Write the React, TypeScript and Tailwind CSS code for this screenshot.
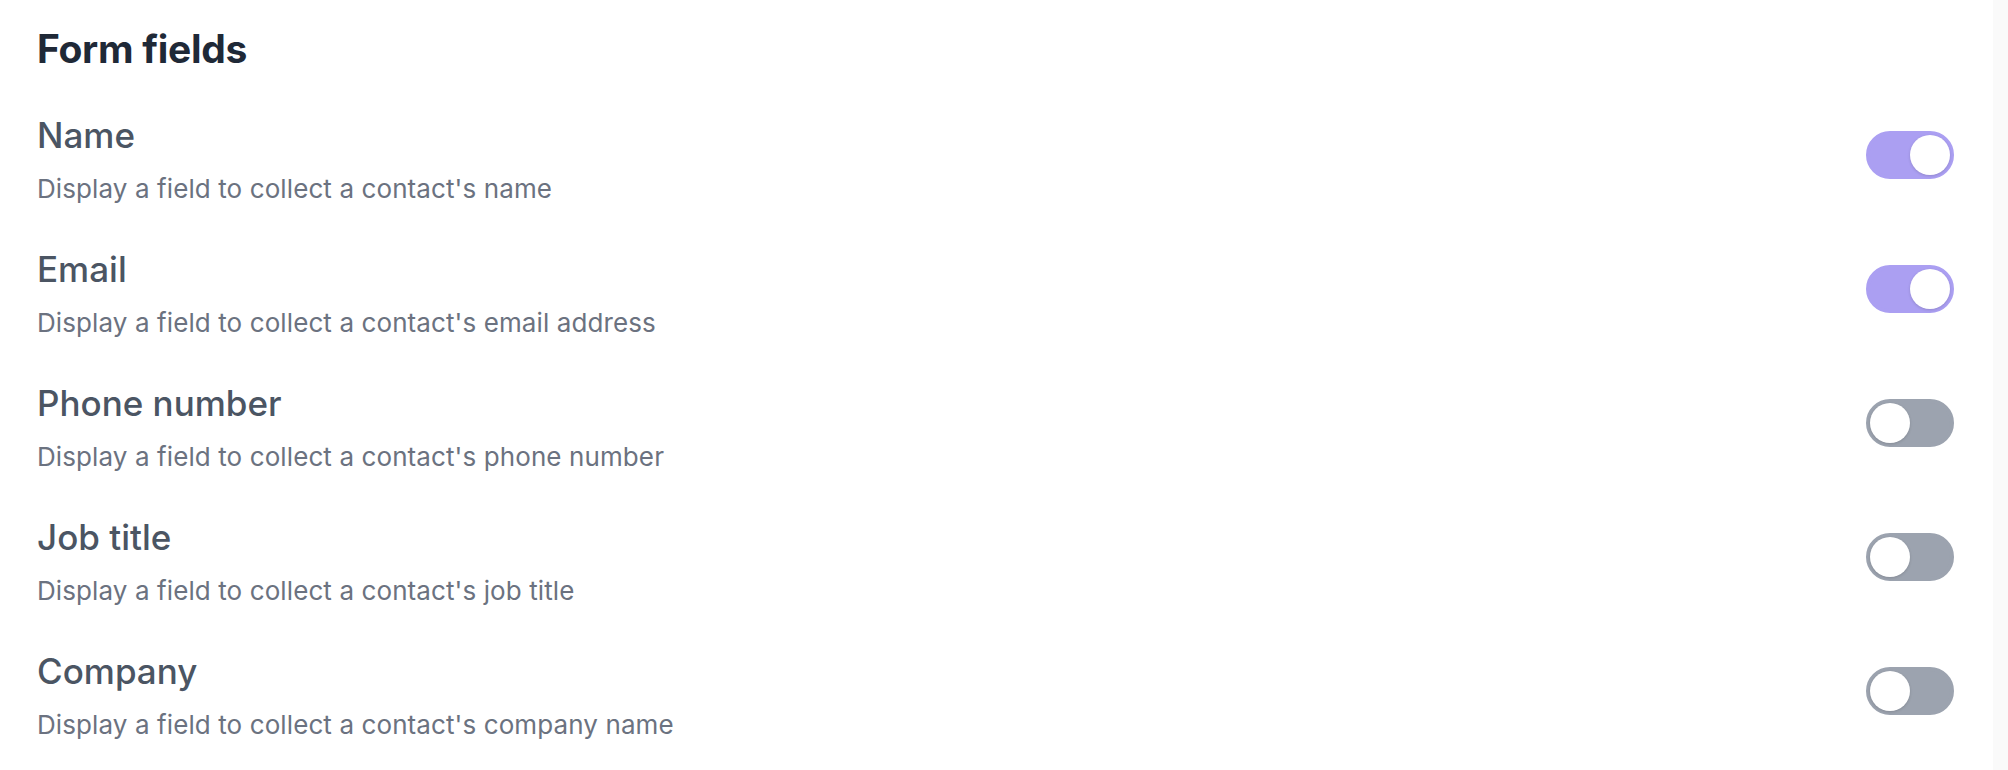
import React, { useState } from "react";

const fields = [
  { label: "Name", desc: "Display a field to collect a contact's name", on: true },
  { label: "Email", desc: "Display a field to collect a contact's email address", on: true },
  { label: "Phone number", desc: "Display a field to collect a contact's phone number", on: false },
  { label: "Job title", desc: "Display a field to collect a contact's job title", on: false },
  { label: "Company", desc: "Display a field to collect a contact's company name", on: false },
];

function Toggle({ on, onClick }: { on: boolean; onClick: () => void }) {
  return (
    <button
      onClick={onClick}
      className={
        "mt-[18px] flex h-[48px] w-[88px] shrink-0 items-center rounded-full border-[4px] " +
        (on ? "justify-end border-[#ab9ff2] bg-[#ab9ff2]" : "justify-start border-[#9ca3af] bg-[#9ca3af]")
      }
    >
      <span className="h-[40px] w-[40px] rounded-full bg-white shadow-[0_1px_3px_rgba(0,0,0,0.15)]" />
    </button>
  );
}

export default function App() {
  const [state, setState] = useState(fields.map((f) => f.on));
  return (
    <div className="flex h-[770px] w-full bg-white" style={{ fontFamily: "Inter, 'Noto Sans', sans-serif" }}>
      <div className="flex-1 pl-[37px] pr-[39px] pt-[25px]">
        <h2 className="text-[39px] font-bold leading-[48px] tracking-[-0.3px] text-[#1f2937]">Form fields</h2>
        <div className="mt-[40px] flex flex-col gap-[41px]">
          {fields.map((f, i) => (
            <div key={f.label} className="flex items-start justify-between">
              <div className="flex flex-col gap-[15px]">
                <div className="text-[35px] font-medium leading-[44px] text-[#4b5563]">{f.label}</div>
                <div className="text-[26px] leading-[34px] tracking-[0.1px] text-[#6b7280]">{f.desc}</div>
              </div>
              <Toggle on={state[i]} onClick={() => setState((s) => s.map((v, j) => (j === i ? !v : v)))} />
            </div>
          ))}
        </div>
      </div>
      <div className="w-[15px] bg-[#fafafa]" />
    </div>
  );
}
